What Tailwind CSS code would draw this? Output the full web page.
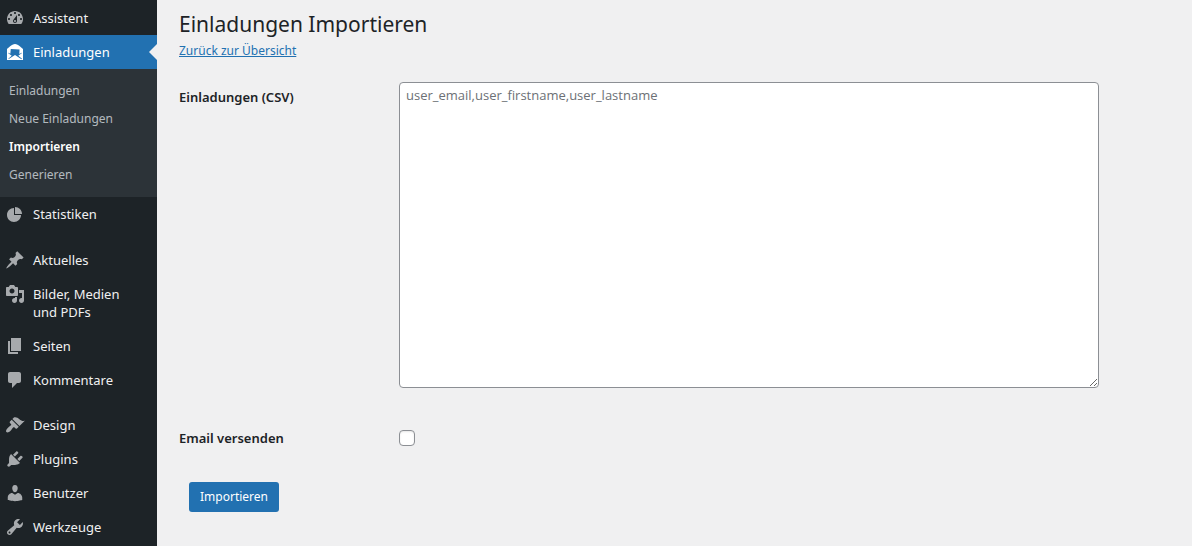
<!DOCTYPE html>
<html lang="de">
  <head>
    <meta charset="UTF-8" />
    <meta name="viewport" content="width=device-width, initial-scale=1.0" />
    <title>Einladungen Importieren</title>
    <script src="https://cdn.jsdelivr.net/npm/@tailwindcss/browser@4"></script>
  </head>
  <body class="flex min-h-screen bg-[#f0f0f1] font-['Noto_Sans',sans-serif] text-[13px] text-[#1d2327]">
    <!-- Admin menu -->
    <nav class="w-[157px] shrink-0 bg-[#1d2327] pt-px text-[13px] leading-[18px] text-[#f0f0f1]">
      <ul>
        <li>
          <a href="#" class="flex gap-2 pl-[5px] pr-5">
            <svg class="mt-[7px] size-5 shrink-0 fill-[#a7aaad]" viewBox="0 0 20 20"><path d="M3.76 16h12.48c1.1-1.37 1.76-3.11 1.76-5 0-4.42-3.58-8-8-8s-8 3.58-8 8c0 1.89.66 3.63 1.76 5zM10 4c.55 0 1 .45 1 1s-.45 1-1 1-1-.45-1-1 .45-1 1-1zM6 6c.55 0 1 .45 1 1s-.45 1-1 1-1-.45-1-1 .45-1 1-1zm8 0c.55 0 1 .45 1 1s-.45 1-1 1-1-.45-1-1 .45-1 1-1zm-5.37 5.55L12 7v6c0 1.1-.9 2-2 2s-2-.9-2-2c0-.57.24-1.08.63-1.45zM4 10c.55 0 1 .45 1 1s-.45 1-1 1-1-.45-1-1 .45-1 1-1zm12 0c.55 0 1 .45 1 1s-.45 1-1 1-1-.45-1-1 .45-1 1-1zm-5 3c0-.55-.45-1-1-1s-1 .45-1 1 .45 1 1 1 1-.45 1-1z" /></svg>
            <span class="py-2">Assistent</span>
          </a>
        </li>
        <li>
          <a href="#" class="relative flex gap-2 bg-[#2271b1] pl-[5px] pr-5 text-white">
            <svg class="mt-[7px] size-5 shrink-0 fill-white" viewBox="0 0 20 20"><path d="M10 2c3 0 8 5 8 5v11H2V7s5-5 8-5zm7 14.72l-3.73-2.92L17 11l-.43-.37-2.26 1.3.24-4.31-8.77-.52-.46 4.54-1.99-.95L3 11l3.73 2.8-3.44 2.85.4.43L10 13l6.53 4.15z" /></svg>
            <span class="py-2">Einladungen</span>
            <!-- Arrow pointing at the active page -->
            <span class="absolute right-0 top-1/2 -translate-y-1/2 border-8 border-transparent border-r-[#f0f0f1]"></span>
          </a>
          <ul class="bg-[#2c3338] py-2 text-xs leading-[18px] text-[#f0f6fc]/70">
            <li><a href="#" class="block px-[9px] py-[5px]">Einladungen</a></li>
            <li><a href="#" class="block px-[9px] py-[5px]">Neue Einladungen</a></li>
            <li><a href="#" class="block px-[9px] py-[5px] font-semibold text-white">Importieren</a></li>
            <li><a href="#" class="block px-[9px] py-[5px]">Generieren</a></li>
          </ul>
        </li>
        <li>
          <a href="#" class="flex gap-2 pl-[5px] pr-5">
            <svg class="mt-[7px] size-5 shrink-0 fill-[#a7aaad]" viewBox="0 0 20 20"><path d="M10 10V3c3.87 0 7 3.13 7 7h-7zM9 4v7h7c0 3.87-3.13 7-7 7s-7-3.13-7-7 3.13-7 7-7z" /></svg>
            <span class="py-2">Statistiken</span>
          </a>
        </li>
      </ul>
      <ul class="mt-3">
        <li>
          <a href="#" class="flex gap-2 pl-[5px] pr-5">
            <svg class="mt-[7px] size-5 shrink-0 fill-[#a7aaad]" viewBox="0 0 20 20"><path d="M10.44 3.02l1.82-1.82 6.36 6.35-1.83 1.82c-1.05-.68-2.48-.57-3.41.36l-.75.75c-.92.93-1.04 2.35-.35 3.41l-1.83 1.82-2.41-2.41-2.8 2.79c-.42.42-3.38 2.71-3.8 2.29s1.86-3.39 2.28-3.81l2.79-2.79L4.1 9.36l1.83-1.82c1.05.69 2.48.57 3.4-.36l.75-.75c.93-.92 1.05-2.35.36-3.41z" /></svg>
            <span class="py-2">Aktuelles</span>
          </a>
        </li>
        <li>
          <a href="#" class="flex gap-2 pl-[5px] pr-5">
            <svg class="mt-[7px] size-5 shrink-0 fill-[#a7aaad]" viewBox="0 0 20 20"><path d="M13 11V4c0-.55-.45-1-1-1h-1.67L9 1H5L3.67 3H2c-.55 0-1 .45-1 1v7c0 .55.45 1 1 1h10c.55 0 1-.45 1-1zM7 4.5c1.38 0 2.5 1.12 2.5 2.5S8.38 9.5 7 9.5 4.5 8.38 4.5 7 5.62 4.5 7 4.5zM14 6h5v10.5c0 1.38-1.12 2.5-2.5 2.5S14 17.88 14 16.5s1.12-2.5 2.5-2.5c.17 0 .34.02.5.05V9h-3V6zm-4 8.05V13h2v3.5c0 1.38-1.12 2.5-2.5 2.5S7 17.88 7 16.5 8.12 14 9.5 14c.17 0 .34.02.5.05z" /></svg>
            <span class="py-2">Bilder, Medien und PDFs</span>
          </a>
        </li>
        <li>
          <a href="#" class="flex gap-2 pl-[5px] pr-5">
            <svg class="mt-[7px] size-5 shrink-0 fill-[#a7aaad]" viewBox="0 0 20 20"><path d="M6 15V2h10v13H6zm-1 1h8v2H3V5h2v11z" /></svg>
            <span class="py-2">Seiten</span>
          </a>
        </li>
        <li>
          <a href="#" class="flex gap-2 pl-[5px] pr-5">
            <svg class="mt-[7px] size-5 shrink-0 fill-[#a7aaad]" viewBox="0 0 20 20"><path d="M5 2h9c1.1 0 2 .9 2 2v7c0 1.1-.9 2-2 2h-2l-5 5v-5H5c-1.1 0-2-.9-2-2V4c0-1.1.9-2 2-2z" /></svg>
            <span class="py-2">Kommentare</span>
          </a>
        </li>
      </ul>
      <ul class="mt-[11px]">
        <li>
          <a href="#" class="flex gap-2 pl-[5px] pr-5">
            <svg class="mt-[7px] size-5 shrink-0 fill-[#a7aaad]" viewBox="0 0 20 20"><path d="M14.48 11.06L7.41 3.99l1.5-1.5c.5-.56 2.3-.47 3.51.32 1.21.8 1.43 1.28 2.91 2.1 1.18.64 2.45 1.26 4.45.85zm-.71.71L6.7 4.7 4.93 6.47c-.39.39-.39 1.02 0 1.41l1.06 1.06c.39.39.39 1.03 0 1.42-.6.6-1.43 1.11-2.21 1.69-.35.26-.7.53-1.01.84C1.43 14.23.4 16.08 1.4 17.07c.99 1 2.84-.03 4.18-1.36.31-.31.58-.66.85-1.02.57-.78 1.08-1.61 1.69-2.21.39-.39 1.02-.39 1.41 0l1.06 1.06c.39.39 1.02.39 1.41 0z" /></svg>
            <span class="py-2">Design</span>
          </a>
        </li>
        <li>
          <a href="#" class="flex gap-2 pl-[5px] pr-5">
            <svg class="mt-[7px] size-5 shrink-0 fill-[#a7aaad]" viewBox="0 0 20 20"><path d="M13.11 4.36L9.87 7.6 8 5.73l3.24-3.24c.35-.34 1.05-.2 1.56.32.52.51.66 1.21.31 1.55zm-8 1.77l.91-1.12 9.01 9.01-1.19.84c-.71.71-2.63 1.16-3.82 1.16H6.14L4.9 17.26c-.59.59-1.54.59-2.12 0-.59-.58-.59-1.53 0-2.12l1.24-1.24v-3.88c0-1.13.4-3.19 1.09-3.89zm7.26 3.97l3.24-3.24c.34-.35 1.04-.21 1.55.31.52.51.66 1.21.31 1.55l-3.24 3.25z" /></svg>
            <span class="py-2">Plugins</span>
          </a>
        </li>
        <li>
          <a href="#" class="flex gap-2 pl-[5px] pr-5">
            <svg class="mt-[7px] size-5 shrink-0 fill-[#a7aaad]" viewBox="0 0 20 20"><path d="M10 9.25c-2.27 0-2.73-3.44-2.73-3.44C7 4.02 7.82 2 9.97 2c2.16 0 2.98 2.02 2.71 3.81 0 0-.41 3.44-2.68 3.44zm0 2.57L12.72 10c2.39 0 4.52 2.33 4.52 4.53v2.49s-3.65 1.13-7.24 1.13c-3.65 0-7.24-1.13-7.24-1.13v-2.49c0-2.25 1.94-4.48 4.47-4.48z" /></svg>
            <span class="py-2">Benutzer</span>
          </a>
        </li>
        <li>
          <a href="#" class="flex gap-2 pl-[5px] pr-5">
            <svg class="mt-[7px] size-5 shrink-0 fill-[#a7aaad]" viewBox="0 0 20 20"><path d="M16.68 9.77c-1.34 1.34-3.3 1.67-4.95.99l-5.41 6.52c-.99.99-2.59.99-3.58 0s-.99-2.59 0-3.57l6.52-5.42c-.68-1.65-.35-3.61.99-4.95 1.28-1.28 3.12-1.62 4.72-1.06l-2.89 2.89 2.82 2.82 2.86-2.87c.53 1.58.18 3.39-1.08 4.65zM3.81 16.21c.4.39 1.04.39 1.43 0 .4-.4.4-1.04 0-1.43-.39-.4-1.03-.4-1.43 0-.39.39-.39 1.03 0 1.43z" /></svg>
            <span class="py-2">Werkzeuge</span>
          </a>
        </li>
      </ul>
    </nav>

    <main class="min-w-0 flex-1 px-[22px] pt-2">
      <h1 class="text-[21px] leading-8">Einladungen Importieren</h1>
      <a href="#" class="block w-fit text-xs leading-[22px] text-[#2271b1] underline">Zurück zur Übersicht</a>

      <form class="mt-5">
        <div class="grid grid-cols-[220px_1fr]">
          <label for="csv" class="pt-[5px] leading-5 font-semibold">Einladungen (CSV)</label>
          <textarea id="csv" rows="15" placeholder="user_email,user_firstname,user_lastname" class="w-full max-w-[700px] rounded border border-[#8c8f94] bg-white px-1.5 py-0.5 font-['Open_Sans',sans-serif] leading-5 placeholder:text-[#6c7075]"></textarea>
        </div>
        <div class="mt-10 grid grid-cols-[220px_1fr]">
          <label for="send" class="leading-5 font-semibold">Email versenden</label>
          <input id="send" type="checkbox" class="mt-0.5 size-4 appearance-none rounded border border-[#8c8f94] bg-white shadow-[inset_0_1px_2px_rgba(0,0,0,0.1)] checked:bg-[#2271b1]" />
        </div>
        <button type="submit" class="mt-[34px] ml-2.5 h-[30px] rounded-[3px] bg-[#2271b1] px-[11px] text-xs text-white">Importieren</button>
      </form>
    </main>
  </body>
</html>
